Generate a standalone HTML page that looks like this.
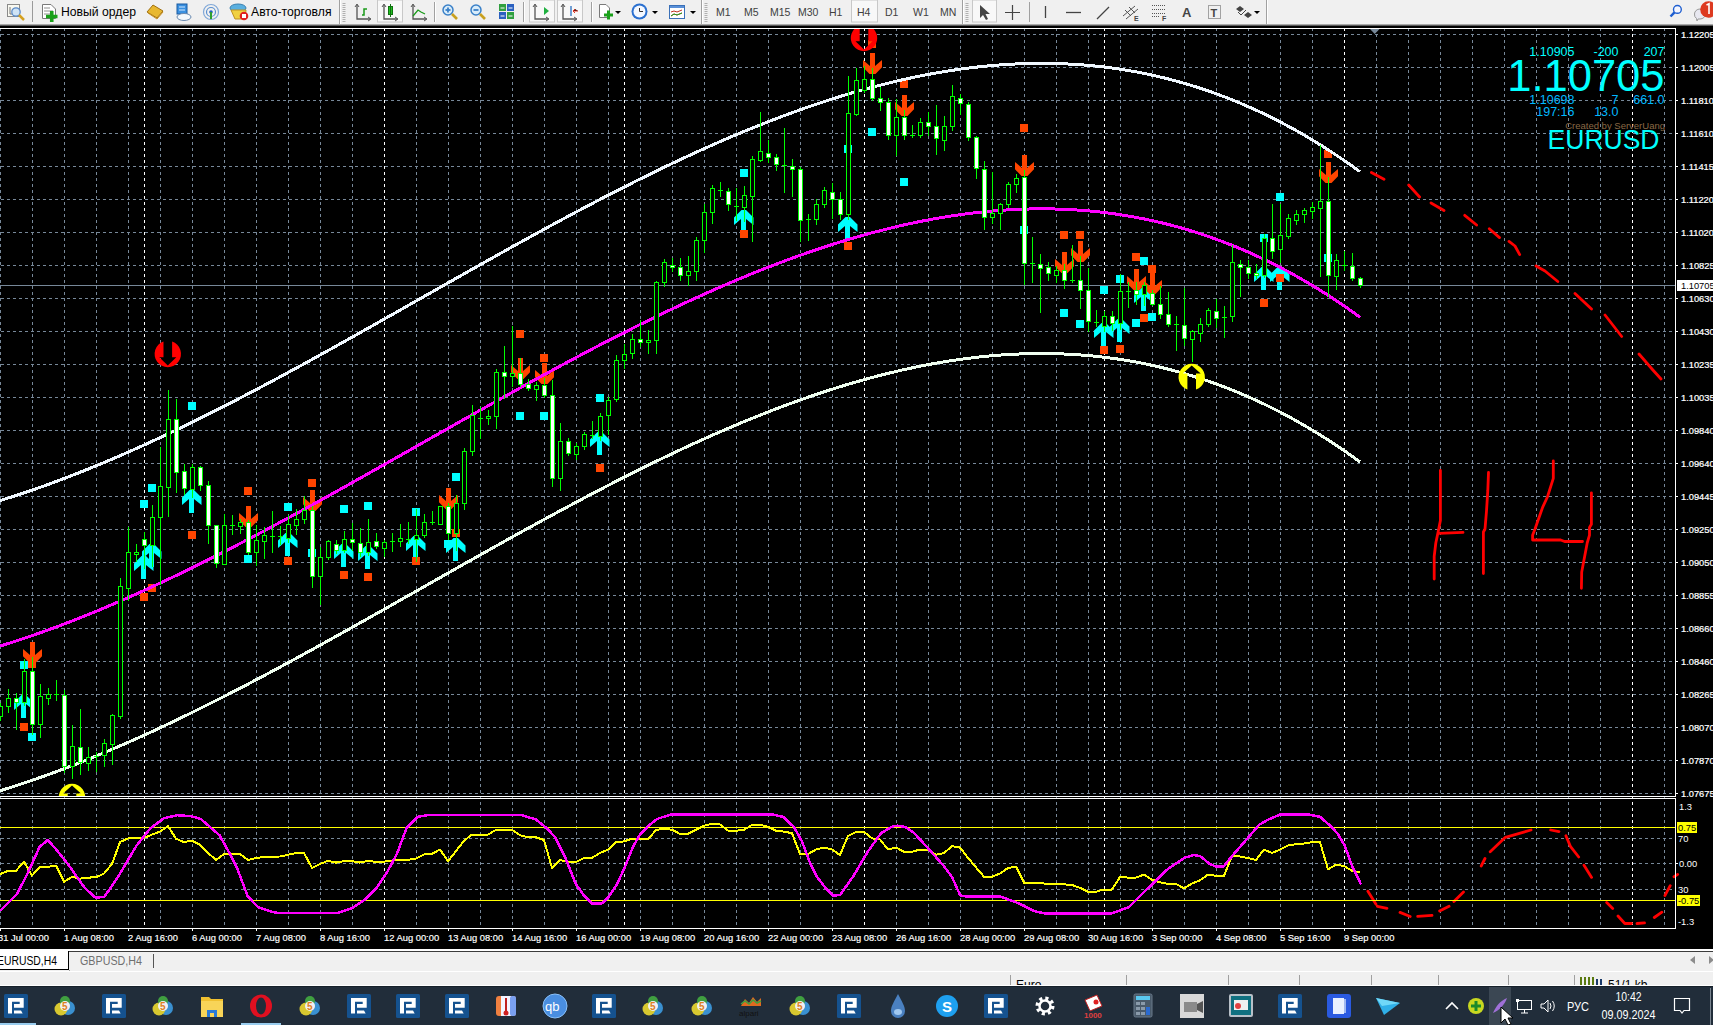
<!DOCTYPE html>
<html><head><meta charset="utf-8"><title>EURUSD,H4</title>
<style>
html,body{margin:0;padding:0;width:1713px;height:1025px;overflow:hidden;background:#000;}
svg{position:absolute;left:0;top:0;display:block}
text{font-family:"Liberation Sans",sans-serif}
</style></head><body>
<svg width="1713" height="1025" viewBox="0 0 1713 1025">
<!-- toolbar -->
<rect x="0" y="0" width="1713" height="24" fill="#f0f0f0"/>
<rect x="0" y="24" width="1713" height="1" fill="#a9a9a9"/>
<rect x="0" y="25" width="1713" height="1" fill="#595959"/>
<rect x="7.5" y="4.5" width="12" height="12" fill="#f8f8f0" stroke="#8a8a8a"/><path d="M10 7V14H18" stroke="#777" fill="none"/><circle cx="16" cy="12" r="4.2" fill="#cfe3f5" stroke="#5a8ac8" stroke-width="1.3"/><path d="M19 15L24 20" stroke="#d4a020" stroke-width="2.5"/><rect x="32" y="1" width="1" height="21" fill="#9a9a9a"/><path d="M42.5 4.5H51L55.5 9V18.5H42.5Z" fill="#fff" stroke="#7a7a7a"/><path d="M44 8H50M44 11H53M44 14H50" stroke="#909090"/><path d="M46 16.5H57.5M51.75 11V22" stroke="#1aa01a" stroke-width="3.6"/><text x="61" y="15.5" font-size="12.2" fill="#000">Новый ордер</text><path d="M147 12L153 5L163 11L157 18Z" fill="#e8b830" stroke="#a07010" stroke-width="1"/><path d="M148 13L157 19L163 12" stroke="#c89020" fill="none" stroke-width="1"/><rect x="177" y="4" width="10" height="10" fill="#3a90e0" stroke="#1a5aa0"/><path d="M179 7H185M179 10H185" stroke="#d0e8ff"/><ellipse cx="184" cy="17" rx="7" ry="3.5" fill="#f4f8fc" stroke="#6a8ab0"/><circle cx="211" cy="12" r="7.5" fill="none" stroke="#80a8d8" stroke-width="1.2"/><circle cx="211" cy="12" r="4.5" fill="none" stroke="#5a90d0" stroke-width="1.2"/><circle cx="211" cy="12" r="1.8" fill="#2060c0"/><path d="M211 12V19" stroke="#30a030" stroke-width="2"/><ellipse cx="238" cy="8" rx="8" ry="4" fill="#5ab0e0" stroke="#3a80b0"/><path d="M231 10L235 19H245L246 10Z" fill="#f0d040" stroke="#c09020"/><circle cx="244" cy="16" r="4.3" fill="#e02020"/><rect x="242" y="14" width="4" height="4" fill="#fff"/><text x="251" y="15.5" font-size="12.2" fill="#000">Авто-торговля</text><rect x="339" y="0" width="1" height="24" fill="#a0a0a0"/><rect x="340" y="0" width="1" height="24" fill="#ffffff"/><path d="M344 3V22" stroke="#b0b0b0" stroke-width="3" stroke-dasharray="1 1"/><path d="M357 5V19H370" stroke="#555" fill="none" stroke-width="1.3"/><path d="M355 7L357 4L359 7M368 17L371 19L368 21" stroke="#555" fill="none"/><path d="M362 15H364V9H367" stroke="#1a9a1a" fill="none" stroke-width="1.5"/><rect x="377.5" y="0" width="25" height="22" fill="#f8f8f8" stroke="#c8c8c8" stroke-width="1"/><path d="M384 5V19H397" stroke="#555" fill="none" stroke-width="1.3"/><path d="M382 7L384 4L386 7M395 17L398 19L395 21" stroke="#555" fill="none"/><rect x="388.5" y="6.5" width="4" height="8" fill="#20c020" stroke="#107010"/><path d="M390.5 4V17" stroke="#107010"/><path d="M413 5V19H426" stroke="#555" fill="none" stroke-width="1.3"/><path d="M411 7L413 4L415 7M424 17L427 19L424 21" stroke="#555" fill="none"/><path d="M413 16L418 10L421 12L425 14" stroke="#1a9a1a" fill="none" stroke-width="1.3"/><rect x="434" y="2" width="1" height="20" fill="#a0a0a0"/><rect x="435" y="2" width="1" height="20" fill="#ffffff"/><circle cx="448" cy="10" r="5" fill="#d8ecfa" stroke="#3a80c8" stroke-width="1.5"/><path d="M452 14L457 19" stroke="#c8a020" stroke-width="2.6"/><path d="M445.5 10H450.5" stroke="#3a80c8" stroke-width="1.8"/><path d="M448 7.5V12.5" stroke="#3a80c8" stroke-width="1.8"/><circle cx="476" cy="10" r="5" fill="#d8ecfa" stroke="#3a80c8" stroke-width="1.5"/><path d="M480 14L485 19" stroke="#c8a020" stroke-width="2.6"/><path d="M473.5 10H478.5" stroke="#3a80c8" stroke-width="1.8"/><rect x="499" y="4" width="7" height="7" fill="#30a040"/><rect x="507" y="4" width="7" height="7" fill="#2a60c0"/><rect x="499" y="12" width="7" height="7" fill="#2a60c0"/><rect x="507" y="12" width="7" height="7" fill="#30a040"/><path d="M500.5 8H504.5M508.5 8H512.5M500.5 16H504.5M508.5 16H512.5" stroke="#fff"/><rect x="523" y="2" width="1" height="20" fill="#a0a0a0"/><rect x="524" y="2" width="1" height="20" fill="#ffffff"/><rect x="529.5" y="0" width="25" height="22" fill="#f8f8f8" stroke="#c8c8c8" stroke-width="1"/><path d="M535 5V19H548" stroke="#555" fill="none" stroke-width="1.3"/><path d="M533 7L535 4L537 7M546 17L549 19L546 21" stroke="#555" fill="none"/><path d="M544 7L549 11L544 15Z" fill="#20b040"/><rect x="557.5" y="0" width="25" height="22" fill="#f8f8f8" stroke="#c8c8c8" stroke-width="1"/><path d="M563 5V19H576" stroke="#555" fill="none" stroke-width="1.3"/><path d="M561 7L563 4L565 7M574 17L577 19L574 21" stroke="#555" fill="none"/><path d="M571 6V16" stroke="#2a70c0" stroke-width="1.3"/><path d="M578 11H573L575 9M573 11L575 13" stroke="#e03020"/><rect x="591" y="2" width="1" height="20" fill="#a0a0a0"/><rect x="592" y="2" width="1" height="20" fill="#ffffff"/><path d="M599.5 4.5H606L609.5 8V17.5H599.5Z" fill="#fff" stroke="#7a7a7a"/><path d="M604 15H613M608.5 10.5V19.5" stroke="#1aa01a" stroke-width="3"/><path d="M615 11H621L618 14Z" fill="#000"/><circle cx="639.5" cy="11.5" r="8" fill="#2a70d0"/><circle cx="639.5" cy="11.5" r="6" fill="#f4f8ff"/><path d="M639.5 8V11.5H643" stroke="#333" fill="none"/><path d="M652 11H658L655 14Z" fill="#000"/><rect x="669.5" y="5.5" width="15" height="13" fill="#fff" stroke="#3a70b8"/><rect x="670" y="6" width="14" height="2" fill="#5a90d8"/><path d="M671 12L674 11L677 12L682 10M671 16L674 14L677 15L682 13" stroke="#c03020" fill="none"/><path d="M671 16L674 14L677 15L682 13" stroke="#20a020" fill="none"/><path d="M690 11H696L693 14Z" fill="#000"/><rect x="701" y="0" width="1" height="24" fill="#a0a0a0"/><rect x="702" y="0" width="1" height="24" fill="#ffffff"/><path d="M706 3V22" stroke="#b0b0b0" stroke-width="3" stroke-dasharray="1 1"/><rect x="851.5" y="0" width="26" height="22" fill="#f8f8f8" stroke="#c8c8c8" stroke-width="1"/><text x="716" y="16" font-size="10.5" fill="#404040">M1</text><text x="744" y="16" font-size="10.5" fill="#404040">M5</text><text x="770" y="16" font-size="10.5" fill="#404040">M15</text><text x="798" y="16" font-size="10.5" fill="#404040">M30</text><text x="829" y="16" font-size="10.5" fill="#404040">H1</text><text x="857" y="16" font-size="10.5" fill="#404040">H4</text><text x="885" y="16" font-size="10.5" fill="#404040">D1</text><text x="913" y="16" font-size="10.5" fill="#404040">W1</text><text x="940" y="16" font-size="10.5" fill="#404040">MN</text><rect x="962" y="0" width="1" height="24" fill="#a0a0a0"/><rect x="963" y="0" width="1" height="24" fill="#ffffff"/><path d="M967 3V22" stroke="#b0b0b0" stroke-width="3" stroke-dasharray="1 1"/><rect x="972.5" y="0" width="24" height="22" fill="#f8f8f8" stroke="#c8c8c8" stroke-width="1"/><path d="M980 5L980 18L983 15L986 20L988 19L985.5 14H990Z" fill="#444"/><path d="M1005 12.5H1020M1012.5 5V20" stroke="#444" stroke-width="1.2"/><rect x="1029" y="2" width="1" height="20" fill="#a0a0a0"/><path d="M1045.5 6V18" stroke="#444" stroke-width="1.3"/><path d="M1066 12.5H1081" stroke="#444" stroke-width="1.3"/><path d="M1097 19L1109 7" stroke="#444" stroke-width="1.3"/><path d="M1123 16L1135 6M1126 19L1138 9M1125 10L1131 16M1129 7L1135 13" stroke="#555" fill="none"/><text x="1134" y="21" font-size="7" font-weight="bold" fill="#444">E</text><path d="M1152 5.5H1165M1152 9.5H1165M1152 13.5H1165M1152 16.5H1160" stroke="#555" stroke-dasharray="1 1"/><text x="1162" y="21" font-size="7" font-weight="bold" fill="#444">F</text><text x="1182" y="17" font-size="13" font-weight="bold" fill="#444">A</text><rect x="1208.5" y="5.5" width="12" height="13" fill="none" stroke="#555" stroke-dasharray="1 1"/><text x="1210.5" y="17" font-size="11" font-weight="bold" fill="#444">T</text><path d="M1236 9L1240 6L1244 9L1240 12Z M1244 15L1248 12L1252 15L1248 18Z" fill="#444"/><path d="M1238 12L1241 15L1246 10" stroke="#444" fill="none"/><path d="M1254 11H1260L1257 14Z" fill="#000"/><rect x="1266" y="0" width="1" height="24" fill="#a0a0a0"/><rect x="1267" y="0" width="1" height="24" fill="#fff"/><circle cx="1677.4" cy="9.4" r="3.9" fill="#f4f6ff" stroke="#1e5ed0" stroke-width="1.4"/><path d="M1674.5 12.3L1670.5 16.5" stroke="#1e5ed0" stroke-width="2.4"/><path d="M1694.5 14A5.5 5 0 1 1 1700 19H1698L1697 21L1696.5 18.5A5.5 5 0 0 1 1694.5 14Z" fill="#e8e8f0" stroke="#999"/><circle cx="1708.5" cy="9.5" r="8.3" fill="#dd3a20"/><path d="M1706.5 5L1709 3.8V14" stroke="#fff" stroke-width="1.6" fill="none"/>
<rect x="0" y="26" width="1713" height="923" fill="#000"/>
<path d="M1 34.5H1675M1 67.5H1675M1 100.5H1675M1 133.5H1675M1 166.5H1675M1 199.5H1675M1 232.5H1675M1 265.5H1675M1 298.5H1675M1 331.5H1675M1 364.5H1675M1 397.5H1675M1 430.5H1675M1 463.5H1675M1 496.5H1675M1 529.5H1675M1 562.5H1675M1 595.5H1675M1 628.5H1675M1 661.5H1675M1 694.5H1675M1 727.5H1675M1 760.5H1675M1 793.5H1675M1 838.5H1675M1 863.5H1675M1 889.5H1675" stroke="#778899" stroke-width="1" stroke-dasharray="3 3" fill="none" shape-rendering="crispEdges"/>
<path d="M0.5 28V928M32.5 28V928M64.5 28V928M96.5 28V928M128.5 28V928M160.5 28V928M192.5 28V928M224.5 28V928M256.5 28V928M288.5 28V928M320.5 28V928M352.5 28V928M416.5 28V928M448.5 28V928M480.5 28V928M512.5 28V928M544.5 28V928M576.5 28V928M608.5 28V928M640.5 28V928M672.5 28V928M704.5 28V928M736.5 28V928M768.5 28V928M800.5 28V928M832.5 28V928M896.5 28V928M928.5 28V928M960.5 28V928M992.5 28V928M1024.5 28V928M1056.5 28V928M1088.5 28V928M1120.5 28V928M1152.5 28V928M1184.5 28V928M1216.5 28V928M1248.5 28V928M1280.5 28V928M1312.5 28V928M1376.5 28V928M1408.5 28V928M1440.5 28V928M1472.5 28V928M1504.5 28V928M1536.5 28V928M1568.5 28V928M1600.5 28V928M1664.5 28V928" stroke="#778899" stroke-width="1" stroke-dasharray="3 3" fill="none" shape-rendering="crispEdges"/>
<path d="M144.5 28V928M384.5 28V928M624.5 28V928M864.5 28V928M1104.5 28V928M1344.5 28V928M1632.5 28V928" stroke="#ffffff" stroke-width="1" stroke-dasharray="3 3" fill="none" shape-rendering="crispEdges"/>
<path d="M0 285.5H1675" stroke="#778899" stroke-width="1" shape-rendering="crispEdges"/>
<path d="M1370 29H1379.5L1374.75 34Z" fill="#778899"/>
<path d="M21.5 695L26 695L33.5 702.5L33.5 710L26 704L26 718L21 718L21 704L14 710L14 702.5Z" fill="#00ffff"/><path d="M141.5 556L146 556L153.5 563.5L153.5 571L146 565L146 579L141 579L141 565L134 571L134 563.5Z" fill="#00ffff"/><path d="M149.5 544L154 544L161.5 551.5L161.5 559L154 553L154 567L149 567L149 553L142 559L142 551.5Z" fill="#00ffff"/><path d="M189.5 490L194 490L201.5 497.5L201.5 505L194 499L194 513L189 513L189 499L182 505L182 497.5Z" fill="#00ffff"/><path d="M285.5 533L290 533L297.5 540.5L297.5 548L290 542L290 556L285 556L285 542L278 548L278 540.5Z" fill="#00ffff"/><path d="M341.5 544L346 544L353.5 551.5L353.5 559L346 553L346 567L341 567L341 553L334 559L334 551.5Z" fill="#00ffff"/><path d="M365.5 546L370 546L377.5 553.5L377.5 561L370 555L370 569L365 569L365 555L358 561L358 553.5Z" fill="#00ffff"/><path d="M413.5 536L418 536L425.5 543.5L425.5 551L418 545L418 559L413 559L413 545L406 551L406 543.5Z" fill="#00ffff"/><path d="M453.5 538L458 538L465.5 545.5L465.5 553L458 547L458 561L453 561L453 547L446 553L446 545.5Z" fill="#00ffff"/><path d="M597.5 432L602 432L609.5 439.5L609.5 447L602 441L602 455L597 455L597 441L590 447L590 439.5Z" fill="#00ffff"/><path d="M741.5 210L746 210L753.5 217.5L753.5 225L746 219L746 233L741 233L741 219L734 225L734 217.5Z" fill="#00ffff"/><path d="M845.5 217L850 217L857.5 224.5L857.5 232L850 226L850 240L845 240L845 226L838 232L838 224.5Z" fill="#00ffff"/><path d="M1101.5 323L1106 323L1113.5 330.5L1113.5 338L1106 332L1106 346L1101 346L1101 332L1094 338L1094 330.5Z" fill="#00ffff"/><path d="M1117.5 319L1122 319L1129.5 326.5L1129.5 334L1122 328L1122 342L1117 342L1117 328L1110 334L1110 326.5Z" fill="#00ffff"/><path d="M1141.5 288L1146 288L1153.5 295.5L1153.5 303L1146 297L1146 311L1141 311L1141 297L1134 303L1134 295.5Z" fill="#00ffff"/><path d="M1261.5 267L1266 267L1273.5 274.5L1273.5 282L1266 276L1266 290L1261 290L1261 276L1254 282L1254 274.5Z" fill="#00ffff"/><path d="M1277.5 267L1282 267L1289.5 274.5L1289.5 282L1282 276L1282 290L1277 290L1277 276L1270 282L1270 274.5Z" fill="#00ffff"/><path d="M30 642L35 642L35 655L42 649L42 656.3L35.5 663L29.5 663L23 656.3L23 649L30 655Z" fill="#ff4500"/><path d="M246 506L251 506L251 519L258 513L258 520.3L251.5 527L245.5 527L239 520.3L239 513L246 519Z" fill="#ff4500"/><path d="M310 490L315 490L315 503L322 497L322 504.3L315.5 511L309.5 511L303 504.3L303 497L310 503Z" fill="#ff4500"/><path d="M446 488L451 488L451 501L458 495L458 502.3L451.5 509L445.5 509L439 502.3L439 495L446 501Z" fill="#ff4500"/><path d="M518 358L523 358L523 371L530 365L530 372.3L523.5 379L517.5 379L511 372.3L511 365L518 371Z" fill="#ff4500"/><path d="M542 363L547 363L547 376L554 370L554 377.3L547.5 384L541.5 384L535 377.3L535 370L542 376Z" fill="#ff4500"/><path d="M870 53L875 53L875 66L882 60L882 67.3L875.5 74L869.5 74L863 67.3L863 60L870 66Z" fill="#ff4500"/><path d="M902 95L907 95L907 108L914 102L914 109.3L907.5 116L901.5 116L895 109.3L895 102L902 108Z" fill="#ff4500"/><path d="M1022 155L1027 155L1027 168L1034 162L1034 169.3L1027.5 176L1021.5 176L1015 169.3L1015 162L1022 168Z" fill="#ff4500"/><path d="M1062 252L1067 252L1067 265L1074 259L1074 266.3L1067.5 273L1061.5 273L1055 266.3L1055 259L1062 265Z" fill="#ff4500"/><path d="M1078 241L1083 241L1083 254L1090 248L1090 255.3L1083.5 262L1077.5 262L1071 255.3L1071 248L1078 254Z" fill="#ff4500"/><path d="M1134 269L1139 269L1139 282L1146 276L1146 283.3L1139.5 290L1133.5 290L1127 283.3L1127 276L1134 282Z" fill="#ff4500"/><path d="M1150 273L1155 273L1155 286L1162 280L1162 287.3L1155.5 294L1149.5 294L1143 287.3L1143 280L1150 286Z" fill="#ff4500"/><path d="M1326 162L1331 162L1331 175L1338 169L1338 176.3L1331.5 183L1325.5 183L1319 176.3L1319 169L1326 175Z" fill="#ff4500"/>
<rect x="20" y="661" width="8" height="8" fill="#00ffff"/><rect x="28" y="733" width="8" height="8" fill="#00ffff"/><rect x="188" y="402" width="8" height="8" fill="#00ffff"/><rect x="148" y="484" width="8" height="8" fill="#00ffff"/><rect x="140" y="500" width="8" height="8" fill="#00ffff"/><rect x="244" y="555" width="8" height="8" fill="#00ffff"/><rect x="284" y="503" width="8" height="8" fill="#00ffff"/><rect x="308" y="549" width="8" height="8" fill="#00ffff"/><rect x="340" y="505" width="8" height="8" fill="#00ffff"/><rect x="364" y="502" width="8" height="8" fill="#00ffff"/><rect x="412" y="508" width="8" height="8" fill="#00ffff"/><rect x="452" y="473" width="8" height="8" fill="#00ffff"/><rect x="444" y="540" width="8" height="8" fill="#00ffff"/><rect x="516" y="412" width="8" height="8" fill="#00ffff"/><rect x="540" y="412" width="8" height="8" fill="#00ffff"/><rect x="596" y="394" width="8" height="8" fill="#00ffff"/><rect x="740" y="169" width="8" height="8" fill="#00ffff"/><rect x="844" y="145" width="8" height="8" fill="#00ffff"/><rect x="868" y="128" width="8" height="8" fill="#00ffff"/><rect x="900" y="178" width="8" height="8" fill="#00ffff"/><rect x="1020" y="226" width="8" height="8" fill="#00ffff"/><rect x="1060" y="309" width="8" height="8" fill="#00ffff"/><rect x="1076" y="320" width="8" height="8" fill="#00ffff"/><rect x="1100" y="286" width="8" height="8" fill="#00ffff"/><rect x="1116" y="275" width="8" height="8" fill="#00ffff"/><rect x="1132" y="319" width="8" height="8" fill="#00ffff"/><rect x="1140" y="257" width="8" height="8" fill="#00ffff"/><rect x="1148" y="313" width="8" height="8" fill="#00ffff"/><rect x="1260" y="234" width="8" height="8" fill="#00ffff"/><rect x="1276" y="193" width="8" height="8" fill="#00ffff"/><rect x="1324" y="254" width="8" height="8" fill="#00ffff"/><rect x="28" y="660" width="8" height="8" fill="#ff4500"/><rect x="20" y="723" width="8" height="8" fill="#ff4500"/><rect x="188" y="531" width="8" height="8" fill="#ff4500"/><rect x="148" y="584" width="8" height="8" fill="#ff4500"/><rect x="140" y="593" width="8" height="8" fill="#ff4500"/><rect x="244" y="487" width="8" height="8" fill="#ff4500"/><rect x="284" y="557" width="8" height="8" fill="#ff4500"/><rect x="308" y="479" width="8" height="8" fill="#ff4500"/><rect x="340" y="571" width="8" height="8" fill="#ff4500"/><rect x="364" y="573" width="8" height="8" fill="#ff4500"/><rect x="412" y="557" width="8" height="8" fill="#ff4500"/><rect x="452" y="529" width="8" height="8" fill="#ff4500"/><rect x="516" y="330" width="8" height="8" fill="#ff4500"/><rect x="540" y="354" width="8" height="8" fill="#ff4500"/><rect x="596" y="464" width="8" height="8" fill="#ff4500"/><rect x="740" y="230" width="8" height="8" fill="#ff4500"/><rect x="844" y="242" width="8" height="8" fill="#ff4500"/><rect x="868" y="40" width="8" height="8" fill="#ff4500"/><rect x="900" y="80" width="8" height="8" fill="#ff4500"/><rect x="1020" y="124" width="8" height="8" fill="#ff4500"/><rect x="1060" y="231" width="8" height="8" fill="#ff4500"/><rect x="1076" y="231" width="8" height="8" fill="#ff4500"/><rect x="1100" y="346" width="8" height="8" fill="#ff4500"/><rect x="1116" y="345" width="8" height="8" fill="#ff4500"/><rect x="1132" y="253" width="8" height="8" fill="#ff4500"/><rect x="1140" y="314" width="8" height="8" fill="#ff4500"/><rect x="1148" y="265" width="8" height="8" fill="#ff4500"/><rect x="1260" y="299" width="8" height="8" fill="#ff4500"/><rect x="1276" y="274" width="8" height="8" fill="#ff4500"/><rect x="1324" y="150" width="8" height="8" fill="#ff4500"/>
<path d="M0 500.59L4 499.35L8 498.09L12 496.82L16 495.52L20 494.21L24 492.87L28 491.52L32 490.15L36 488.76L40 487.35L44 485.93L48 484.49L52 483.03L56 481.55L60 480.05L64 478.54L68 477.01L72 475.47L76 473.91L80 472.33L84 470.73L88 469.12L92 467.50L96 465.86L100 464.20L104 462.53L108 460.84L112 459.14L116 457.43L120 455.70L124 453.95L128 452.19L132 450.42L136 448.64L140 446.84L144 445.03L148 443.20L152 441.36L156 439.51L160 437.65L164 435.77L168 433.89L172 431.99L176 430.07L180 428.15L184 426.22L188 424.27L192 422.32L196 420.35L200 418.37L204 416.38L208 414.38L212 412.38L216 410.36L220 408.33L224 406.29L228 404.25L232 402.19L236 400.13L240 398.05L244 395.97L248 393.88L252 391.78L256 389.68L260 387.56L264 385.44L268 383.31L272 381.17L276 379.03L280 376.88L284 374.72L288 372.56L292 370.39L296 368.22L300 366.04L304 363.85L308 361.66L312 359.46L316 357.25L320 355.05L324 352.83L328 350.62L332 348.40L336 346.17L340 343.94L344 341.71L348 339.47L352 337.23L356 334.98L360 332.74L364 330.49L368 328.23L372 325.98L376 323.72L380 321.46L384 319.20L388 316.94L392 314.67L396 312.41L400 310.14L404 307.87L408 305.60L412 303.33L416 301.06L420 298.79L424 296.52L428 294.25L432 291.98L436 289.71L440 287.45L444 285.18L448 282.91L452 280.65L456 278.38L460 276.12L464 273.86L468 271.60L472 269.35L476 267.09L480 264.84L484 262.59L488 260.35L492 258.10L496 255.87L500 253.63L504 251.40L508 249.17L512 246.95L516 244.73L520 242.51L524 240.30L528 238.10L532 235.90L536 233.70L540 231.51L544 229.33L548 227.15L552 224.98L556 222.81L560 220.65L564 218.50L568 216.36L572 214.22L576 212.08L580 209.96L584 207.84L588 205.73L592 203.63L596 201.54L600 199.45L604 197.37L608 195.30L612 193.25L616 191.19L620 189.15L624 187.12L628 185.10L632 183.09L636 181.08L640 179.09L644 177.11L648 175.14L652 173.17L656 171.22L660 169.29L664 167.36L668 165.44L672 163.54L676 161.64L680 159.76L684 157.89L688 156.04L692 154.19L696 152.36L700 150.54L704 148.74L708 146.95L712 145.17L716 143.40L720 141.65L724 139.92L728 138.20L732 136.49L736 134.80L740 133.12L744 131.45L748 129.81L752 128.17L756 126.56L760 124.96L764 123.37L768 121.80L772 120.25L776 118.71L780 117.19L784 115.69L788 114.21L792 112.74L796 111.29L800 109.86L804 108.44L808 107.04L812 105.67L816 104.30L820 102.96L824 101.64L828 100.34L832 99.05L836 97.79L840 96.54L844 95.32L848 94.11L852 92.92L856 91.76L860 90.61L864 89.49L868 88.38L872 87.30L876 86.24L880 85.20L884 84.18L888 83.19L892 82.21L896 81.26L900 80.33L904 79.42L908 78.54L912 77.68L916 76.84L920 76.02L924 75.23L928 74.46L932 73.72L936 73.00L940 72.30L944 71.63L948 70.99L952 70.37L956 69.77L960 69.20L964 68.65L968 68.13L972 67.64L976 67.17L980 66.73L984 66.31L988 65.92L992 65.56L996 65.22L1000 64.91L1004 64.63L1008 64.38L1012 64.15L1016 63.95L1020 63.78L1024 63.64L1028 63.52L1032 63.44L1036 63.38L1040 63.35L1044 63.36L1048 63.39L1052 63.45L1056 63.54L1060 63.66L1064 63.81L1068 63.99L1072 64.20L1076 64.44L1080 64.71L1084 65.02L1088 65.35L1092 65.72L1096 66.11L1100 66.54L1104 67.01L1108 67.50L1112 68.03L1116 68.59L1120 69.18L1124 69.80L1128 70.46L1132 71.15L1136 71.87L1140 72.63L1144 73.42L1148 74.25L1152 75.11L1156 76.00L1160 76.93L1164 77.90L1168 78.90L1172 79.93L1176 81.00L1180 82.11L1184 83.25L1188 84.42L1192 85.64L1196 86.89L1200 88.17L1204 89.50L1208 90.86L1212 92.25L1216 93.69L1220 95.16L1224 96.67L1228 98.21L1232 99.80L1236 101.42L1240 103.08L1244 104.78L1248 106.52L1252 108.30L1256 110.12L1260 111.97L1264 113.87L1268 115.81L1272 117.78L1276 119.80L1280 121.85L1284 123.95L1288 126.09L1292 128.26L1296 130.48L1300 132.74L1304 135.04L1308 137.39L1312 139.77L1316 142.20L1320 144.67L1324 147.18L1328 149.73L1332 152.33L1336 154.97L1340 157.65L1344 160.38L1348 163.15L1352 165.96L1356 168.82L1360 171.72" stroke="#f0f8ff" stroke-width="3" fill="none" shape-rendering="crispEdges"/>
<path d="M0 790.79L4 789.55L8 788.29L12 787.02L16 785.72L20 784.41L24 783.07L28 781.72L32 780.35L36 778.96L40 777.55L44 776.13L48 774.69L52 773.23L56 771.75L60 770.25L64 768.74L68 767.21L72 765.67L76 764.11L80 762.53L84 760.93L88 759.32L92 757.70L96 756.06L100 754.40L104 752.73L108 751.04L112 749.34L116 747.63L120 745.90L124 744.15L128 742.39L132 740.62L136 738.84L140 737.04L144 735.23L148 733.40L152 731.56L156 729.71L160 727.85L164 725.97L168 724.09L172 722.19L176 720.27L180 718.35L184 716.42L188 714.47L192 712.52L196 710.55L200 708.57L204 706.58L208 704.58L212 702.58L216 700.56L220 698.53L224 696.49L228 694.45L232 692.39L236 690.33L240 688.25L244 686.17L248 684.08L252 681.98L256 679.88L260 677.76L264 675.64L268 673.51L272 671.37L276 669.23L280 667.08L284 664.92L288 662.76L292 660.59L296 658.42L300 656.24L304 654.05L308 651.86L312 649.66L316 647.45L320 645.25L324 643.03L328 640.82L332 638.60L336 636.37L340 634.14L344 631.91L348 629.67L352 627.43L356 625.18L360 622.94L364 620.69L368 618.43L372 616.18L376 613.92L380 611.66L384 609.40L388 607.14L392 604.87L396 602.61L400 600.34L404 598.07L408 595.80L412 593.53L416 591.26L420 588.99L424 586.72L428 584.45L432 582.18L436 579.91L440 577.65L444 575.38L448 573.11L452 570.85L456 568.58L460 566.32L464 564.06L468 561.80L472 559.55L476 557.29L480 555.04L484 552.79L488 550.55L492 548.30L496 546.07L500 543.83L504 541.60L508 539.37L512 537.15L516 534.93L520 532.71L524 530.50L528 528.30L532 526.10L536 523.90L540 521.71L544 519.53L548 517.35L552 515.18L556 513.01L560 510.85L564 508.70L568 506.56L572 504.42L576 502.28L580 500.16L584 498.04L588 495.93L592 493.83L596 491.74L600 489.65L604 487.57L608 485.50L612 483.45L616 481.39L620 479.35L624 477.32L628 475.30L632 473.29L636 471.28L640 469.29L644 467.31L648 465.34L652 463.37L656 461.42L660 459.49L664 457.56L668 455.64L672 453.74L676 451.84L680 449.96L684 448.09L688 446.24L692 444.39L696 442.56L700 440.74L704 438.94L708 437.15L712 435.37L716 433.60L720 431.85L724 430.12L728 428.40L732 426.69L736 425.00L740 423.32L744 421.65L748 420.01L752 418.37L756 416.76L760 415.16L764 413.57L768 412.00L772 410.45L776 408.91L780 407.39L784 405.89L788 404.41L792 402.94L796 401.49L800 400.06L804 398.64L808 397.24L812 395.87L816 394.50L820 393.16L824 391.84L828 390.54L832 389.25L836 387.99L840 386.74L844 385.52L848 384.31L852 383.12L856 381.96L860 380.81L864 379.69L868 378.58L872 377.50L876 376.44L880 375.40L884 374.38L888 373.39L892 372.41L896 371.46L900 370.53L904 369.62L908 368.74L912 367.88L916 367.04L920 366.22L924 365.43L928 364.66L932 363.92L936 363.20L940 362.50L944 361.83L948 361.19L952 360.57L956 359.97L960 359.40L964 358.85L968 358.33L972 357.84L976 357.37L980 356.93L984 356.51L988 356.12L992 355.76L996 355.42L1000 355.11L1004 354.83L1008 354.58L1012 354.35L1016 354.15L1020 353.98L1024 353.84L1028 353.72L1032 353.64L1036 353.58L1040 353.55L1044 353.56L1048 353.59L1052 353.65L1056 353.74L1060 353.86L1064 354.01L1068 354.19L1072 354.40L1076 354.64L1080 354.91L1084 355.22L1088 355.55L1092 355.92L1096 356.31L1100 356.74L1104 357.21L1108 357.70L1112 358.23L1116 358.79L1120 359.38L1124 360.00L1128 360.66L1132 361.35L1136 362.07L1140 362.83L1144 363.62L1148 364.45L1152 365.31L1156 366.20L1160 367.13L1164 368.10L1168 369.10L1172 370.13L1176 371.20L1180 372.31L1184 373.45L1188 374.62L1192 375.84L1196 377.09L1200 378.37L1204 379.70L1208 381.06L1212 382.45L1216 383.89L1220 385.36L1224 386.87L1228 388.41L1232 390.00L1236 391.62L1240 393.28L1244 394.98L1248 396.72L1252 398.50L1256 400.32L1260 402.17L1264 404.07L1268 406.01L1272 407.98L1276 410.00L1280 412.05L1284 414.15L1288 416.29L1292 418.46L1296 420.68L1300 422.94L1304 425.24L1308 427.59L1312 429.97L1316 432.40L1320 434.87L1324 437.38L1328 439.93L1332 442.53L1336 445.17L1340 447.85L1344 450.58L1348 453.35L1352 456.16L1356 459.02L1360 461.92" stroke="#f0fff0" stroke-width="3" fill="none" shape-rendering="crispEdges"/>
<path d="M0 646.09L4 644.85L8 643.59L12 642.32L16 641.02L20 639.71L24 638.37L28 637.02L32 635.65L36 634.26L40 632.85L44 631.43L48 629.99L52 628.53L56 627.05L60 625.55L64 624.04L68 622.51L72 620.97L76 619.41L80 617.83L84 616.23L88 614.62L92 613.00L96 611.36L100 609.70L104 608.03L108 606.34L112 604.64L116 602.93L120 601.20L124 599.45L128 597.69L132 595.92L136 594.14L140 592.34L144 590.53L148 588.70L152 586.86L156 585.01L160 583.15L164 581.27L168 579.39L172 577.49L176 575.57L180 573.65L184 571.72L188 569.77L192 567.82L196 565.85L200 563.87L204 561.88L208 559.88L212 557.88L216 555.86L220 553.83L224 551.79L228 549.75L232 547.69L236 545.63L240 543.55L244 541.47L248 539.38L252 537.28L256 535.18L260 533.06L264 530.94L268 528.81L272 526.67L276 524.53L280 522.38L284 520.22L288 518.06L292 515.89L296 513.72L300 511.54L304 509.35L308 507.16L312 504.96L316 502.75L320 500.55L324 498.33L328 496.12L332 493.90L336 491.67L340 489.44L344 487.21L348 484.97L352 482.73L356 480.48L360 478.24L364 475.99L368 473.73L372 471.48L376 469.22L380 466.96L384 464.70L388 462.44L392 460.17L396 457.91L400 455.64L404 453.37L408 451.10L412 448.83L416 446.56L420 444.29L424 442.02L428 439.75L432 437.48L436 435.21L440 432.95L444 430.68L448 428.41L452 426.15L456 423.88L460 421.62L464 419.36L468 417.10L472 414.85L476 412.59L480 410.34L484 408.09L488 405.85L492 403.60L496 401.37L500 399.13L504 396.90L508 394.67L512 392.45L516 390.23L520 388.01L524 385.80L528 383.60L532 381.40L536 379.20L540 377.01L544 374.83L548 372.65L552 370.48L556 368.31L560 366.15L564 364.00L568 361.86L572 359.72L576 357.58L580 355.46L584 353.34L588 351.23L592 349.13L596 347.04L600 344.95L604 342.87L608 340.80L612 338.75L616 336.69L620 334.65L624 332.62L628 330.60L632 328.59L636 326.58L640 324.59L644 322.61L648 320.64L652 318.67L656 316.72L660 314.79L664 312.86L668 310.94L672 309.04L676 307.14L680 305.26L684 303.39L688 301.54L692 299.69L696 297.86L700 296.04L704 294.24L708 292.45L712 290.67L716 288.90L720 287.15L724 285.42L728 283.70L732 281.99L736 280.30L740 278.62L744 276.95L748 275.31L752 273.67L756 272.06L760 270.46L764 268.87L768 267.30L772 265.75L776 264.21L780 262.69L784 261.19L788 259.71L792 258.24L796 256.79L800 255.36L804 253.94L808 252.54L812 251.17L816 249.80L820 248.46L824 247.14L828 245.84L832 244.55L836 243.29L840 242.04L844 240.82L848 239.61L852 238.42L856 237.26L860 236.11L864 234.99L868 233.88L872 232.80L876 231.74L880 230.70L884 229.68L888 228.69L892 227.71L896 226.76L900 225.83L904 224.92L908 224.04L912 223.18L916 222.34L920 221.52L924 220.73L928 219.96L932 219.22L936 218.50L940 217.80L944 217.13L948 216.49L952 215.87L956 215.27L960 214.70L964 214.15L968 213.63L972 213.14L976 212.67L980 212.23L984 211.81L988 211.42L992 211.06L996 210.72L1000 210.41L1004 210.13L1008 209.88L1012 209.65L1016 209.45L1020 209.28L1024 209.14L1028 209.02L1032 208.94L1036 208.88L1040 208.85L1044 208.86L1048 208.89L1052 208.95L1056 209.04L1060 209.16L1064 209.31L1068 209.49L1072 209.70L1076 209.94L1080 210.21L1084 210.52L1088 210.85L1092 211.22L1096 211.61L1100 212.04L1104 212.51L1108 213.00L1112 213.53L1116 214.09L1120 214.68L1124 215.30L1128 215.96L1132 216.65L1136 217.37L1140 218.13L1144 218.92L1148 219.75L1152 220.61L1156 221.50L1160 222.43L1164 223.40L1168 224.40L1172 225.43L1176 226.50L1180 227.61L1184 228.75L1188 229.92L1192 231.14L1196 232.39L1200 233.67L1204 235.00L1208 236.36L1212 237.75L1216 239.19L1220 240.66L1224 242.17L1228 243.71L1232 245.30L1236 246.92L1240 248.58L1244 250.28L1248 252.02L1252 253.80L1256 255.62L1260 257.47L1264 259.37L1268 261.31L1272 263.28L1276 265.30L1280 267.35L1284 269.45L1288 271.59L1292 273.76L1296 275.98L1300 278.24L1304 280.54L1308 282.89L1312 285.27L1316 287.70L1320 290.17L1324 292.68L1328 295.23L1332 297.83L1336 300.47L1340 303.15L1344 305.88L1348 308.65L1352 311.46L1356 314.32L1360 317.22" stroke="#ff00ff" stroke-width="3" fill="none" shape-rendering="crispEdges"/>
<g shape-rendering="crispEdges"><path d="M0.5 703V721M8.5 689V713M16.5 693V730M24.5 659V706M32.5 657V735M40.5 684V738M48.5 688V705M56.5 680V701M54 694.5H59M64.5 690V773M72.5 725V779M80.5 709V775M88.5 747V771M96.5 752V772M94 756.5H99M104.5 739V767M112.5 714V765M120.5 578V719M128.5 527V601M136.5 544V562M144.5 532V569M152.5 505V567M160.5 447V585M168.5 390V517M176.5 399V493M184.5 464V495M192.5 464V498M200.5 466V491M208.5 481V544M216.5 525V568M224.5 514V565M232.5 515V535M230 525.5H235M240.5 519V534M248.5 520V555M256.5 525V566M264.5 527V559M272.5 511V553M270 536.5H275M280.5 526V545M278 536.5H283M288.5 515V543M296.5 509V535M304.5 496V524M312.5 506V588M320.5 547V605M328.5 540V560M336.5 540V554M344.5 531V553M352.5 523V551M360.5 528V557M368.5 519V556M376.5 533V549M384.5 540V557M392.5 533V552M390 541.5H395M400.5 524V547M408.5 522V544M406 539.5H411M416.5 509V562M424.5 514V538M432.5 511V525M430 522.5H435M440.5 506V525M448.5 503V540M456.5 495V551M464.5 448V510M472.5 405V456M480.5 407V439M478 418.5H483M488.5 410V425M496.5 369V429M504.5 346V399M512.5 326V387M520.5 358V387M528.5 379V391M536.5 382V401M544.5 378V398M552.5 380V487M560.5 423V491M568.5 438V456M576.5 443V460M584.5 432V450M592.5 421V439M590 435.5H595M600.5 413V441M608.5 397V435M616.5 355V402M624.5 344V369M632.5 334V359M640.5 320V347M648.5 330V354M656.5 281V354M664.5 259V287M672.5 258V272M680.5 258V281M688.5 256V286M696.5 237V281M704.5 204V253M712.5 185V224M720.5 182V197M718 190.5H723M728.5 188V211M736.5 188V221M734 206.5H739M744.5 186V222M752.5 156V242M760.5 112V162M768.5 140V163M776.5 154V171M784.5 128V193M782 165.5H787M792.5 159V197M800.5 167V242M808.5 214V241M806 219.5H811M816.5 199V225M824.5 187V208M832.5 183V219M840.5 192V220M848.5 76V220M856.5 68V116M864.5 66V93M872.5 68V101M880.5 87V111M888.5 98V140M896.5 99V156M904.5 110V140M912.5 125V138M910 135.5H915M920.5 118V138M928.5 112V136M936.5 105V155M944.5 116V151M952.5 85V131M960.5 94V115M968.5 102V141M976.5 136V179M984.5 161V230M992.5 172V224M1000.5 203V230M1008.5 182V208M1016.5 174V193M1024.5 170V285M1032.5 237V283M1030 263.5H1035M1040.5 254V313M1048.5 262V281M1056.5 266V283M1064.5 264V289M1072.5 245V283M1070 280.5H1075M1080.5 256V309M1088.5 268V332M1096.5 310V327M1094 322.5H1099M1104.5 311V332M1112.5 311V331M1120.5 274V330M1128.5 282V308M1126 291.5H1131M1136.5 282V305M1144.5 282V306M1152.5 290V306M1160.5 286V319M1168.5 292V327M1176.5 316V351M1174 324.5H1179M1184.5 288V346M1192.5 330V362M1200.5 318V342M1208.5 308V327M1216.5 299V328M1224.5 306V338M1222 317.5H1227M1232.5 245V322M1240.5 260V297M1248.5 260V279M1256.5 264V279M1264.5 234V278M1272.5 204V259M1280.5 204V263M1288.5 214V239M1296.5 210V225M1304.5 208V223M1312.5 202V219M1320.5 145V277M1328.5 177V297M1336.5 254V290M1344.5 251V271M1342 265.5H1347M1352.5 253V281M1360.5 277V288" stroke="#00ff00" stroke-width="1" fill="none"/><rect x="-1.5" y="706.5" width="4" height="10" fill="#000" stroke="#00ff00" stroke-width="1"/><rect x="6.5" y="698.5" width="4" height="8" fill="#000" stroke="#00ff00" stroke-width="1"/><rect x="22.5" y="671.5" width="4" height="31" fill="#000" stroke="#00ff00" stroke-width="1"/><rect x="38.5" y="696.5" width="4" height="28" fill="#000" stroke="#00ff00" stroke-width="1"/><rect x="46.5" y="694.5" width="4" height="4" fill="#000" stroke="#00ff00" stroke-width="1"/><rect x="70.5" y="746.5" width="4" height="20" fill="#000" stroke="#00ff00" stroke-width="1"/><rect x="86.5" y="757.5" width="4" height="6" fill="#000" stroke="#00ff00" stroke-width="1"/><rect x="102.5" y="743.5" width="4" height="12" fill="#000" stroke="#00ff00" stroke-width="1"/><rect x="110.5" y="715.5" width="4" height="29" fill="#000" stroke="#00ff00" stroke-width="1"/><rect x="118.5" y="586.5" width="4" height="130" fill="#000" stroke="#00ff00" stroke-width="1"/><rect x="126.5" y="552.5" width="4" height="36" fill="#000" stroke="#00ff00" stroke-width="1"/><rect x="134.5" y="552.5" width="4" height="2" fill="#000" stroke="#00ff00" stroke-width="1"/><rect x="150.5" y="517.5" width="4" height="28" fill="#000" stroke="#00ff00" stroke-width="1"/><rect x="158.5" y="486.5" width="4" height="31" fill="#000" stroke="#00ff00" stroke-width="1"/><rect x="166.5" y="419.5" width="4" height="68" fill="#000" stroke="#00ff00" stroke-width="1"/><rect x="190.5" y="467.5" width="4" height="22" fill="#000" stroke="#00ff00" stroke-width="1"/><rect x="222.5" y="525.5" width="4" height="39" fill="#000" stroke="#00ff00" stroke-width="1"/><rect x="238.5" y="522.5" width="4" height="4" fill="#000" stroke="#00ff00" stroke-width="1"/><rect x="254.5" y="540.5" width="4" height="12" fill="#000" stroke="#00ff00" stroke-width="1"/><rect x="262.5" y="535.5" width="4" height="6" fill="#000" stroke="#00ff00" stroke-width="1"/><rect x="286.5" y="524.5" width="4" height="14" fill="#000" stroke="#00ff00" stroke-width="1"/><rect x="294.5" y="519.5" width="4" height="6" fill="#000" stroke="#00ff00" stroke-width="1"/><rect x="302.5" y="510.5" width="4" height="9" fill="#000" stroke="#00ff00" stroke-width="1"/><rect x="318.5" y="557.5" width="4" height="19" fill="#000" stroke="#00ff00" stroke-width="1"/><rect x="326.5" y="541.5" width="4" height="16" fill="#000" stroke="#00ff00" stroke-width="1"/><rect x="342.5" y="539.5" width="4" height="11" fill="#000" stroke="#00ff00" stroke-width="1"/><rect x="366.5" y="542.5" width="4" height="10" fill="#000" stroke="#00ff00" stroke-width="1"/><rect x="382.5" y="542.5" width="4" height="6" fill="#000" stroke="#00ff00" stroke-width="1"/><rect x="398.5" y="538.5" width="4" height="3" fill="#000" stroke="#00ff00" stroke-width="1"/><rect x="414.5" y="535.5" width="4" height="4" fill="#000" stroke="#00ff00" stroke-width="1"/><rect x="422.5" y="522.5" width="4" height="13" fill="#000" stroke="#00ff00" stroke-width="1"/><rect x="438.5" y="506.5" width="4" height="18" fill="#000" stroke="#00ff00" stroke-width="1"/><rect x="454.5" y="503.5" width="4" height="30" fill="#000" stroke="#00ff00" stroke-width="1"/><rect x="462.5" y="451.5" width="4" height="52" fill="#000" stroke="#00ff00" stroke-width="1"/><rect x="470.5" y="415.5" width="4" height="36" fill="#000" stroke="#00ff00" stroke-width="1"/><rect x="486.5" y="416.5" width="4" height="2" fill="#000" stroke="#00ff00" stroke-width="1"/><rect x="494.5" y="372.5" width="4" height="44" fill="#000" stroke="#00ff00" stroke-width="1"/><rect x="510.5" y="373.5" width="4" height="3" fill="#000" stroke="#00ff00" stroke-width="1"/><rect x="534.5" y="385.5" width="4" height="4" fill="#000" stroke="#00ff00" stroke-width="1"/><rect x="558.5" y="441.5" width="4" height="37" fill="#000" stroke="#00ff00" stroke-width="1"/><rect x="574.5" y="446.5" width="4" height="8" fill="#000" stroke="#00ff00" stroke-width="1"/><rect x="582.5" y="434.5" width="4" height="12" fill="#000" stroke="#00ff00" stroke-width="1"/><rect x="598.5" y="416.5" width="4" height="20" fill="#000" stroke="#00ff00" stroke-width="1"/><rect x="606.5" y="400.5" width="4" height="15" fill="#000" stroke="#00ff00" stroke-width="1"/><rect x="614.5" y="360.5" width="4" height="39" fill="#000" stroke="#00ff00" stroke-width="1"/><rect x="622.5" y="354.5" width="4" height="6" fill="#000" stroke="#00ff00" stroke-width="1"/><rect x="630.5" y="339.5" width="4" height="14" fill="#000" stroke="#00ff00" stroke-width="1"/><rect x="646.5" y="340.5" width="4" height="2" fill="#000" stroke="#00ff00" stroke-width="1"/><rect x="654.5" y="282.5" width="4" height="58" fill="#000" stroke="#00ff00" stroke-width="1"/><rect x="662.5" y="262.5" width="4" height="20" fill="#000" stroke="#00ff00" stroke-width="1"/><rect x="686.5" y="271.5" width="4" height="4" fill="#000" stroke="#00ff00" stroke-width="1"/><rect x="694.5" y="240.5" width="4" height="31" fill="#000" stroke="#00ff00" stroke-width="1"/><rect x="702.5" y="212.5" width="4" height="28" fill="#000" stroke="#00ff00" stroke-width="1"/><rect x="710.5" y="188.5" width="4" height="24" fill="#000" stroke="#00ff00" stroke-width="1"/><rect x="742.5" y="195.5" width="4" height="12" fill="#000" stroke="#00ff00" stroke-width="1"/><rect x="750.5" y="159.5" width="4" height="37" fill="#000" stroke="#00ff00" stroke-width="1"/><rect x="758.5" y="151.5" width="4" height="9" fill="#000" stroke="#00ff00" stroke-width="1"/><rect x="814.5" y="204.5" width="4" height="15" fill="#000" stroke="#00ff00" stroke-width="1"/><rect x="822.5" y="190.5" width="4" height="14" fill="#000" stroke="#00ff00" stroke-width="1"/><rect x="846.5" y="113.5" width="4" height="101" fill="#000" stroke="#00ff00" stroke-width="1"/><rect x="854.5" y="80.5" width="4" height="34" fill="#000" stroke="#00ff00" stroke-width="1"/><rect x="862.5" y="79.5" width="4" height="11" fill="#000" stroke="#00ff00" stroke-width="1"/><rect x="894.5" y="117.5" width="4" height="18" fill="#000" stroke="#00ff00" stroke-width="1"/><rect x="918.5" y="122.5" width="4" height="13" fill="#000" stroke="#00ff00" stroke-width="1"/><rect x="942.5" y="126.5" width="4" height="14" fill="#000" stroke="#00ff00" stroke-width="1"/><rect x="950.5" y="96.5" width="4" height="30" fill="#000" stroke="#00ff00" stroke-width="1"/><rect x="990.5" y="213.5" width="4" height="4" fill="#000" stroke="#00ff00" stroke-width="1"/><rect x="998.5" y="204.5" width="4" height="9" fill="#000" stroke="#00ff00" stroke-width="1"/><rect x="1006.5" y="184.5" width="4" height="20" fill="#000" stroke="#00ff00" stroke-width="1"/><rect x="1014.5" y="178.5" width="4" height="6" fill="#000" stroke="#00ff00" stroke-width="1"/><rect x="1054.5" y="270.5" width="4" height="5" fill="#000" stroke="#00ff00" stroke-width="1"/><rect x="1102.5" y="316.5" width="4" height="10" fill="#000" stroke="#00ff00" stroke-width="1"/><rect x="1118.5" y="291.5" width="4" height="32" fill="#000" stroke="#00ff00" stroke-width="1"/><rect x="1142.5" y="285.5" width="4" height="9" fill="#000" stroke="#00ff00" stroke-width="1"/><rect x="1190.5" y="331.5" width="4" height="8" fill="#000" stroke="#00ff00" stroke-width="1"/><rect x="1198.5" y="324.5" width="4" height="9" fill="#000" stroke="#00ff00" stroke-width="1"/><rect x="1206.5" y="310.5" width="4" height="14" fill="#000" stroke="#00ff00" stroke-width="1"/><rect x="1230.5" y="262.5" width="4" height="54" fill="#000" stroke="#00ff00" stroke-width="1"/><rect x="1262.5" y="238.5" width="4" height="37" fill="#000" stroke="#00ff00" stroke-width="1"/><rect x="1278.5" y="235.5" width="4" height="14" fill="#000" stroke="#00ff00" stroke-width="1"/><rect x="1286.5" y="218.5" width="4" height="18" fill="#000" stroke="#00ff00" stroke-width="1"/><rect x="1294.5" y="214.5" width="4" height="6" fill="#000" stroke="#00ff00" stroke-width="1"/><rect x="1302.5" y="210.5" width="4" height="4" fill="#000" stroke="#00ff00" stroke-width="1"/><rect x="1310.5" y="207.5" width="4" height="4" fill="#000" stroke="#00ff00" stroke-width="1"/><rect x="1318.5" y="201.5" width="4" height="7" fill="#000" stroke="#00ff00" stroke-width="1"/><rect x="1334.5" y="260.5" width="4" height="16" fill="#000" stroke="#00ff00" stroke-width="1"/><rect x="14.5" y="698.5" width="4" height="4" fill="#fff" stroke="#00ff00" stroke-width="1"/><rect x="30.5" y="671.5" width="4" height="53" fill="#fff" stroke="#00ff00" stroke-width="1"/><rect x="62.5" y="695.5" width="4" height="71" fill="#fff" stroke="#00ff00" stroke-width="1"/><rect x="78.5" y="747.5" width="4" height="15" fill="#fff" stroke="#00ff00" stroke-width="1"/><rect x="142.5" y="539.5" width="4" height="6" fill="#fff" stroke="#00ff00" stroke-width="1"/><rect x="174.5" y="419.5" width="4" height="53" fill="#fff" stroke="#00ff00" stroke-width="1"/><rect x="182.5" y="471.5" width="4" height="17" fill="#fff" stroke="#00ff00" stroke-width="1"/><rect x="198.5" y="467.5" width="4" height="18" fill="#fff" stroke="#00ff00" stroke-width="1"/><rect x="206.5" y="485.5" width="4" height="40" fill="#fff" stroke="#00ff00" stroke-width="1"/><rect x="214.5" y="525.5" width="4" height="38" fill="#fff" stroke="#00ff00" stroke-width="1"/><rect x="246.5" y="522.5" width="4" height="30" fill="#fff" stroke="#00ff00" stroke-width="1"/><rect x="310.5" y="510.5" width="4" height="66" fill="#fff" stroke="#00ff00" stroke-width="1"/><rect x="334.5" y="544.5" width="4" height="6" fill="#fff" stroke="#00ff00" stroke-width="1"/><rect x="350.5" y="539.5" width="4" height="3" fill="#fff" stroke="#00ff00" stroke-width="1"/><rect x="358.5" y="543.5" width="4" height="9" fill="#fff" stroke="#00ff00" stroke-width="1"/><rect x="374.5" y="541.5" width="4" height="5" fill="#fff" stroke="#00ff00" stroke-width="1"/><rect x="446.5" y="506.5" width="4" height="27" fill="#fff" stroke="#00ff00" stroke-width="1"/><rect x="502.5" y="372.5" width="4" height="4" fill="#fff" stroke="#00ff00" stroke-width="1"/><rect x="518.5" y="373.5" width="4" height="11" fill="#fff" stroke="#00ff00" stroke-width="1"/><rect x="526.5" y="384.5" width="4" height="4" fill="#fff" stroke="#00ff00" stroke-width="1"/><rect x="542.5" y="385.5" width="4" height="10" fill="#fff" stroke="#00ff00" stroke-width="1"/><rect x="550.5" y="395.5" width="4" height="83" fill="#fff" stroke="#00ff00" stroke-width="1"/><rect x="566.5" y="441.5" width="4" height="12" fill="#fff" stroke="#00ff00" stroke-width="1"/><rect x="638.5" y="339.5" width="4" height="3" fill="#fff" stroke="#00ff00" stroke-width="1"/><rect x="670.5" y="265.5" width="4" height="2" fill="#fff" stroke="#00ff00" stroke-width="1"/><rect x="678.5" y="267.5" width="4" height="8" fill="#fff" stroke="#00ff00" stroke-width="1"/><rect x="726.5" y="191.5" width="4" height="13" fill="#fff" stroke="#00ff00" stroke-width="1"/><rect x="766.5" y="153.5" width="4" height="4" fill="#fff" stroke="#00ff00" stroke-width="1"/><rect x="774.5" y="157.5" width="4" height="7" fill="#fff" stroke="#00ff00" stroke-width="1"/><rect x="790.5" y="166.5" width="4" height="3" fill="#fff" stroke="#00ff00" stroke-width="1"/><rect x="798.5" y="169.5" width="4" height="51" fill="#fff" stroke="#00ff00" stroke-width="1"/><rect x="830.5" y="192.5" width="4" height="7" fill="#fff" stroke="#00ff00" stroke-width="1"/><rect x="838.5" y="199.5" width="4" height="15" fill="#fff" stroke="#00ff00" stroke-width="1"/><rect x="870.5" y="79.5" width="4" height="19" fill="#fff" stroke="#00ff00" stroke-width="1"/><rect x="878.5" y="98.5" width="4" height="4" fill="#fff" stroke="#00ff00" stroke-width="1"/><rect x="886.5" y="102.5" width="4" height="33" fill="#fff" stroke="#00ff00" stroke-width="1"/><rect x="902.5" y="117.5" width="4" height="18" fill="#fff" stroke="#00ff00" stroke-width="1"/><rect x="926.5" y="122.5" width="4" height="4" fill="#fff" stroke="#00ff00" stroke-width="1"/><rect x="934.5" y="126.5" width="4" height="12" fill="#fff" stroke="#00ff00" stroke-width="1"/><rect x="958.5" y="98.5" width="4" height="5" fill="#fff" stroke="#00ff00" stroke-width="1"/><rect x="966.5" y="104.5" width="4" height="33" fill="#fff" stroke="#00ff00" stroke-width="1"/><rect x="974.5" y="137.5" width="4" height="31" fill="#fff" stroke="#00ff00" stroke-width="1"/><rect x="982.5" y="169.5" width="4" height="48" fill="#fff" stroke="#00ff00" stroke-width="1"/><rect x="1022.5" y="177.5" width="4" height="86" fill="#fff" stroke="#00ff00" stroke-width="1"/><rect x="1038.5" y="264.5" width="4" height="4" fill="#fff" stroke="#00ff00" stroke-width="1"/><rect x="1046.5" y="267.5" width="4" height="6" fill="#fff" stroke="#00ff00" stroke-width="1"/><rect x="1062.5" y="270.5" width="4" height="10" fill="#fff" stroke="#00ff00" stroke-width="1"/><rect x="1078.5" y="280.5" width="4" height="10" fill="#fff" stroke="#00ff00" stroke-width="1"/><rect x="1086.5" y="290.5" width="4" height="31" fill="#fff" stroke="#00ff00" stroke-width="1"/><rect x="1110.5" y="316.5" width="4" height="7" fill="#fff" stroke="#00ff00" stroke-width="1"/><rect x="1134.5" y="290.5" width="4" height="4" fill="#fff" stroke="#00ff00" stroke-width="1"/><rect x="1150.5" y="293.5" width="4" height="11" fill="#fff" stroke="#00ff00" stroke-width="1"/><rect x="1158.5" y="304.5" width="4" height="10" fill="#fff" stroke="#00ff00" stroke-width="1"/><rect x="1166.5" y="314.5" width="4" height="10" fill="#fff" stroke="#00ff00" stroke-width="1"/><rect x="1182.5" y="325.5" width="4" height="13" fill="#fff" stroke="#00ff00" stroke-width="1"/><rect x="1214.5" y="311.5" width="4" height="7" fill="#fff" stroke="#00ff00" stroke-width="1"/><rect x="1238.5" y="264.5" width="4" height="3" fill="#fff" stroke="#00ff00" stroke-width="1"/><rect x="1246.5" y="267.5" width="4" height="6" fill="#fff" stroke="#00ff00" stroke-width="1"/><rect x="1254.5" y="273.5" width="4" height="2" fill="#fff" stroke="#00ff00" stroke-width="1"/><rect x="1270.5" y="238.5" width="4" height="13" fill="#fff" stroke="#00ff00" stroke-width="1"/><rect x="1326.5" y="201.5" width="4" height="74" fill="#fff" stroke="#00ff00" stroke-width="1"/><rect x="1350.5" y="266.5" width="4" height="12" fill="#fff" stroke="#00ff00" stroke-width="1"/><rect x="1358.5" y="278.5" width="4" height="7" fill="#fff" stroke="#00ff00" stroke-width="1"/></g>
<svg x="0" y="29" width="1675" height="767" viewBox="0 29 1675 767" overflow="hidden">
<path d="M172.10000000000002 341.52A13.2 13.2 0 1 1 163.5 341.52L163.5 357.2L159.3 357.2L167.8 365.5L176.3 357.2L172.10000000000002 357.2Z" fill="#ff0000"/>
<path d="M868.3 25.52A13.2 13.2 0 1 1 859.7 25.52L859.7 41.2L855.5 41.2L864 49.5L872.5 41.2L868.3 41.2Z" fill="#ff0000"/>
<path d="M1187.4 389.48A13.2 13.2 0 1 1 1196.0 389.48L1196.0 373.6L1200.7 373.6L1191.7 365.5L1182.7 373.6L1187.4 373.6Z" fill="#ffff00"/>
<path d="M67.7 809.48A13.2 13.2 0 1 1 76.3 809.48L76.3 793.6L81 793.6L72 785.5L63 793.6L67.7 793.6Z" fill="#ffff00"/>
</svg>
<path d="M1371.4 172.5L1384 179.3M1408.7 185L1419.6 197M1431 203L1444 210.5M1464.7 215.3L1476.6 225M1489.3 228.7L1499.5 237.6M1509 241.4L1515 246L1519.7 254.6M1536 266L1545 271L1557.8 281.5M1575 293.4L1591.5 309M1605 315L1621.7 336.5M1639 354L1652 369L1661 379M1440.4 470.4L1440.4 520.4L1438.1 532.1L1435.8 543L1434.2 556.3L1434.2 579M1438.9 533.4L1463 532.4M1488.5 472.5L1487.8 490.7L1486.5 511L1485 529L1483.4 532L1483.4 573.5M1553.3 461L1553.3 478.3L1547.4 497L1542.7 507.1L1535 529L1532.6 535.2L1532.6 540L1560.7 540L1564.6 541.5L1582.5 541.5M1591.4 492.8L1591.4 524.3L1589.5 527.4L1589.5 535.2L1587.2 543L1581.7 572L1581.4 588.3M1367.9 891.3L1376 904.2M1377.4 906.3L1387 908.3M1400 912.4L1410.2 916.5M1417.7 916.3L1432 915.4M1439.6 911L1449.1 906.3M1453.9 901.5L1463.5 892M1481.2 866L1485 858.5M1490.2 851.7L1505.4 837.3L1531 830M1550.7 830L1559 831.6M1565.9 835.8L1570.4 846.4L1578.7 857M1584 865.3L1591.6 877.4M1606.7 902.4L1612.7 908.4M1618 916L1624.8 923.5L1631.6 923.5M1637 923.5L1644.5 922.8M1654.3 917.5L1661.9 912.2M1664.9 895.6L1670.2 885.7M1674 876.7L1677.7 874.4" stroke="#ff0000" stroke-width="2.8" stroke-linecap="round" stroke-linejoin="round" fill="none"/>
<g font-family="Liberation Sans, sans-serif">
<text x="1574.5" y="56" font-size="12.5" fill="#00ffff" text-anchor="end" >1.10905</text>
<text x="1618.5" y="56" font-size="12.5" fill="#00ffff" text-anchor="end" >-200</text>
<text x="1664.5" y="56" font-size="12.5" fill="#00ffff" text-anchor="end" >207</text>
<text x="1664.5" y="91" font-size="43.5" fill="#00ffff" text-anchor="end" >1.10705</text>
<text x="1574.5" y="104" font-size="12.5" fill="#00b8ff" text-anchor="end" >1.10698</text>
<text x="1618.5" y="104" font-size="12.5" fill="#00b8ff" text-anchor="end" >7</text>
<text x="1664.5" y="104" font-size="12.5" fill="#00b8ff" text-anchor="end" >661.0</text>
<text x="1574.5" y="115.5" font-size="12.5" fill="#00b8ff" text-anchor="end" >197:16</text>
<text x="1618.5" y="115.5" font-size="12.5" fill="#00b8ff" text-anchor="end" >13.0</text>
<text x="1665" y="129" font-size="9.5" fill="#8b6a45" text-anchor="end" >Created by ServerUang</text>
<text transform="translate(1659.5 149) scale(0.93 1)" font-size="28.5" fill="#00ffff" text-anchor="end">EURUSD</text>
</g>
<path d="M0 827.5H1675M0 900.5H1675" stroke="#ffff00" stroke-width="1" shape-rendering="crispEdges"/>
<path d="M0 874.2L8 870.8L16 870.8L24 861.6L32 875.6L40 866.7L48 866.7L56 865.7L64 881.7L72 876.9L80 878.7L88 877.6L96 877.3L104 873.5L112 864.0L120 842.1L128 838.4L136 838.4L144 838.0L152 834.6L160 831.6L168 826.1L176 838.7L184 842.1L192 840.7L200 844.8L208 853.0L216 859.9L224 854.0L232 854.0L240 854.0L248 859.9L256 858.0L264 857.0L272 856.7L280 856.5L288 854.8L296 853.0L304 853.0L312 868.0L320 864.0L328 860.8L336 862.6L344 861.2L352 861.2L360 862.6L368 860.8L376 861.9L384 861.6L392 860.5L400 859.9L408 859.9L416 858.5L424 854.4L432 853.7L440 849.6L448 861.2L456 851.0L464 840.7L472 834.6L480 834.6L488 834.6L496 829.8L504 829.8L512 829.8L520 835.3L528 837.3L536 837.3L544 840.0L552 868.0L560 859.9L568 862.0L576 862.0L584 858.0L592 857.8L600 853.0L608 849.6L616 842.1L624 841.4L632 838.7L640 839.0L648 839.0L656 830.2L664 828.5L672 829.8L680 833.9L688 833.9L696 829.8L704 825.7L712 823.7L720 824.4L728 830.5L736 830.8L744 829.8L752 825.0L760 824.8L768 826.7L776 830.8L784 831.6L792 833.2L800 854.0L808 854.0L816 849.6L824 847.6L832 849.6L840 855.0L848 836.0L856 832.1L864 831.9L872 838.4L880 839.4L888 849.6L896 847.6L904 851.7L912 851.7L920 849.6L928 849.6L936 854.8L944 853.0L952 846.2L960 847.6L968 857.8L976 867.4L984 876.7L992 876.7L1000 873.5L1008 868.0L1016 866.7L1024 882.7L1032 882.7L1040 883.0L1048 884.0L1056 884.0L1064 884.4L1072 884.9L1080 887.9L1088 891.7L1096 891.7L1104 889.5L1112 889.5L1120 877.0L1128 877.6L1136 877.6L1144 874.5L1152 879.7L1160 882.4L1168 883.8L1176 883.8L1184 888.5L1192 883.5L1200 880.3L1208 874.6L1216 875.8L1224 875.8L1232 855.8L1240 856.5L1248 858.0L1256 859.9L1264 849.6L1272 853.0L1280 849.6L1288 845.5L1296 844.2L1304 843.5L1312 842.1L1320 842.1L1328 869.4L1336 864.6L1344 866.0L1352 870.8L1360 872.2" stroke="#ffff00" stroke-width="2" fill="none" stroke-linejoin="round" shape-rendering="crispEdges"/>
<path d="M0 911L17 894L27.3 874L39.6 846.9L47.8 840L54.6 847.6L68.3 864.6L84.7 887.9L95.6 897.7L104.5 896.7L118.8 875.6L136.6 845.5L150.2 828.5L163.9 818.2L177.5 815.2L191.2 816.2L200.7 818.9L210 827L219.6 835.3L229.1 852.4L237.3 868.7L247.6 896L257.8 907L271.5 911.8L278.3 913L337 913L352 908.3L364.3 900L376.6 887.9L387.5 871.5L397 853.7L406.6 827.8L417.6 816.8L429.6 814.8L521 814.8L536 819.6L547 828.5L555.2 837.3L564.8 856.5L575.7 883.8L583.9 895.4L592 903.6L601.6 903.6L608.4 897.4L616.6 885L624.8 867.4L633 846.9L640 834.6L647.8 826.4L657.3 818.9L671 814.4L772 814.4L783 816.8L793.9 827L802 841.4L810.2 863.3L817 877L826.6 889.2L833.5 895.8L840.3 894.7L853.7 875.6L867.3 852.4L881 833.2L891.9 826.7L897.4 825.7L905.5 827L913.7 832.6L927.4 847.6L943.8 866L952 877L960.2 895.4L965.6 896.3L999.8 896.3L1017.5 902.9L1033.9 911L1044.8 913.5L1111.5 913.5L1129.2 907L1145.6 890.6L1167.4 869.4L1184.5 857.8L1193.4 855L1200.2 856.2L1209.8 864L1216.6 866.7L1223.4 866.7L1233 855L1246.6 839.4L1258.9 825L1268.2 819.6L1280.5 814.4L1307.8 814.4L1320 816.8L1331 826.4L1337.8 833.9L1344.7 845.5L1351.5 864.6L1361 884.4" stroke="#ff00ff" stroke-width="2.5" fill="none" stroke-linejoin="round" shape-rendering="crispEdges"/>
<g shape-rendering="crispEdges" stroke="#fff" stroke-width="1" fill="none">
<path d="M0 28.5H1675.5V796.5H0"/>
<path d="M0 798.5H1675.5V928.5H0"/>
</g>
<path d="M1676 34.5H1678M1676 67.5H1678M1676 100.5H1678M1676 133.5H1678M1676 166.5H1678M1676 199.5H1678M1676 232.5H1678M1676 265.5H1678M1676 298.5H1678M1676 331.5H1678M1676 364.5H1678M1676 397.5H1678M1676 430.5H1678M1676 463.5H1678M1676 496.5H1678M1676 529.5H1678M1676 562.5H1678M1676 595.5H1678M1676 628.5H1678M1676 661.5H1678M1676 694.5H1678M1676 727.5H1678M1676 760.5H1678M1676 793.5H1678M1676 863.5H1678" stroke="#fff" stroke-width="1" shape-rendering="crispEdges"/>
<path d="M0.5 929V931M64.5 929V931M128.5 929V931M192.5 929V931M256.5 929V931M320.5 929V931M384.5 929V931M448.5 929V931M512.5 929V931M576.5 929V931M640.5 929V931M704.5 929V931M768.5 929V931M832.5 929V931M896.5 929V931M960.5 929V931M1024.5 929V931M1088.5 929V931M1152.5 929V931M1216.5 929V931M1280.5 929V931M1344.5 929V931" stroke="#fff" stroke-width="1" shape-rendering="crispEdges"/>
<g font-family="Liberation Sans, sans-serif" fill="#fff" font-size="9.3">
<text transform="translate(1681 38) scale(0.94 1)" font-size="9.9" stroke="#fff" stroke-width="0.25">1.12205</text>
<text transform="translate(1681 71) scale(0.94 1)" font-size="9.9" stroke="#fff" stroke-width="0.25">1.12005</text>
<text transform="translate(1681 104) scale(0.94 1)" font-size="9.9" stroke="#fff" stroke-width="0.25">1.11810</text>
<text transform="translate(1681 137) scale(0.94 1)" font-size="9.9" stroke="#fff" stroke-width="0.25">1.11610</text>
<text transform="translate(1681 170) scale(0.94 1)" font-size="9.9" stroke="#fff" stroke-width="0.25">1.11415</text>
<text transform="translate(1681 203) scale(0.94 1)" font-size="9.9" stroke="#fff" stroke-width="0.25">1.11220</text>
<text transform="translate(1681 236) scale(0.94 1)" font-size="9.9" stroke="#fff" stroke-width="0.25">1.11020</text>
<text transform="translate(1681 269) scale(0.94 1)" font-size="9.9" stroke="#fff" stroke-width="0.25">1.10825</text>
<text transform="translate(1681 302) scale(0.94 1)" font-size="9.9" stroke="#fff" stroke-width="0.25">1.10630</text>
<text transform="translate(1681 335) scale(0.94 1)" font-size="9.9" stroke="#fff" stroke-width="0.25">1.10430</text>
<text transform="translate(1681 368) scale(0.94 1)" font-size="9.9" stroke="#fff" stroke-width="0.25">1.10235</text>
<text transform="translate(1681 401) scale(0.94 1)" font-size="9.9" stroke="#fff" stroke-width="0.25">1.10035</text>
<text transform="translate(1681 434) scale(0.94 1)" font-size="9.9" stroke="#fff" stroke-width="0.25">1.09840</text>
<text transform="translate(1681 467) scale(0.94 1)" font-size="9.9" stroke="#fff" stroke-width="0.25">1.09640</text>
<text transform="translate(1681 500) scale(0.94 1)" font-size="9.9" stroke="#fff" stroke-width="0.25">1.09445</text>
<text transform="translate(1681 533) scale(0.94 1)" font-size="9.9" stroke="#fff" stroke-width="0.25">1.09250</text>
<text transform="translate(1681 566) scale(0.94 1)" font-size="9.9" stroke="#fff" stroke-width="0.25">1.09050</text>
<text transform="translate(1681 599) scale(0.94 1)" font-size="9.9" stroke="#fff" stroke-width="0.25">1.08855</text>
<text transform="translate(1681 632) scale(0.94 1)" font-size="9.9" stroke="#fff" stroke-width="0.25">1.08660</text>
<text transform="translate(1681 665) scale(0.94 1)" font-size="9.9" stroke="#fff" stroke-width="0.25">1.08460</text>
<text transform="translate(1681 698) scale(0.94 1)" font-size="9.9" stroke="#fff" stroke-width="0.25">1.08265</text>
<text transform="translate(1681 731) scale(0.94 1)" font-size="9.9" stroke="#fff" stroke-width="0.25">1.08070</text>
<text transform="translate(1681 764) scale(0.94 1)" font-size="9.9" stroke="#fff" stroke-width="0.25">1.07870</text>
<text transform="translate(1681 797) scale(0.94 1)" font-size="9.9" stroke="#fff" stroke-width="0.25">1.07675</text>
</g>
<rect x="1677" y="280" width="36" height="11" fill="#fff"/>
<text x="1681" y="289" font-family="Liberation Sans, sans-serif" font-size="9.3" fill="#000">1.10705</text>
<g font-family="Liberation Sans, sans-serif" font-size="9.35" fill="#fff">
<text x="1679" y="810">1.3</text>
<rect x="1677" y="822" width="20" height="11" fill="#ffff00"/><text x="1678" y="831" fill="#000">0.75</text>
<text x="1678" y="842">70</text>
<text x="1679" y="867">0.00</text>
<text x="1678" y="893">30</text>
<rect x="1677" y="895" width="23" height="11" fill="#ffff00"/><text x="1678" y="904" fill="#000">-0.75</text>
<text x="1678" y="925">-1.3</text>
</g>
<g font-family="Liberation Sans, sans-serif" font-size="9.35" fill="#fff">
<text transform="translate(-2 941) scale(0.945 1)" font-size="9.9" stroke="#fff" stroke-width="0.2">31 Jul 00:00</text>
<text transform="translate(64 941) scale(0.945 1)" font-size="9.9" stroke="#fff" stroke-width="0.2">1 Aug 08:00</text>
<text transform="translate(128 941) scale(0.945 1)" font-size="9.9" stroke="#fff" stroke-width="0.2">2 Aug 16:00</text>
<text transform="translate(192 941) scale(0.945 1)" font-size="9.9" stroke="#fff" stroke-width="0.2">6 Aug 00:00</text>
<text transform="translate(256 941) scale(0.945 1)" font-size="9.9" stroke="#fff" stroke-width="0.2">7 Aug 08:00</text>
<text transform="translate(320 941) scale(0.945 1)" font-size="9.9" stroke="#fff" stroke-width="0.2">8 Aug 16:00</text>
<text transform="translate(384 941) scale(0.945 1)" font-size="9.9" stroke="#fff" stroke-width="0.2">12 Aug 00:00</text>
<text transform="translate(448 941) scale(0.945 1)" font-size="9.9" stroke="#fff" stroke-width="0.2">13 Aug 08:00</text>
<text transform="translate(512 941) scale(0.945 1)" font-size="9.9" stroke="#fff" stroke-width="0.2">14 Aug 16:00</text>
<text transform="translate(576 941) scale(0.945 1)" font-size="9.9" stroke="#fff" stroke-width="0.2">16 Aug 00:00</text>
<text transform="translate(640 941) scale(0.945 1)" font-size="9.9" stroke="#fff" stroke-width="0.2">19 Aug 08:00</text>
<text transform="translate(704 941) scale(0.945 1)" font-size="9.9" stroke="#fff" stroke-width="0.2">20 Aug 16:00</text>
<text transform="translate(768 941) scale(0.945 1)" font-size="9.9" stroke="#fff" stroke-width="0.2">22 Aug 00:00</text>
<text transform="translate(832 941) scale(0.945 1)" font-size="9.9" stroke="#fff" stroke-width="0.2">23 Aug 08:00</text>
<text transform="translate(896 941) scale(0.945 1)" font-size="9.9" stroke="#fff" stroke-width="0.2">26 Aug 16:00</text>
<text transform="translate(960 941) scale(0.945 1)" font-size="9.9" stroke="#fff" stroke-width="0.2">28 Aug 00:00</text>
<text transform="translate(1024 941) scale(0.945 1)" font-size="9.9" stroke="#fff" stroke-width="0.2">29 Aug 08:00</text>
<text transform="translate(1088 941) scale(0.945 1)" font-size="9.9" stroke="#fff" stroke-width="0.2">30 Aug 16:00</text>
<text transform="translate(1152 941) scale(0.945 1)" font-size="9.9" stroke="#fff" stroke-width="0.2">3 Sep 00:00</text>
<text transform="translate(1216 941) scale(0.945 1)" font-size="9.9" stroke="#fff" stroke-width="0.2">4 Sep 08:00</text>
<text transform="translate(1280 941) scale(0.945 1)" font-size="9.9" stroke="#fff" stroke-width="0.2">5 Sep 16:00</text>
<text transform="translate(1344 941) scale(0.945 1)" font-size="9.9" stroke="#fff" stroke-width="0.2">9 Sep 00:00</text>
</g>
<!-- tab bar -->
<rect x="0" y="949" width="1713" height="2" fill="#ffffff"/>
<rect x="0" y="951" width="1713" height="1" fill="#3c3c3c"/>
<rect x="0" y="952" width="1713" height="19" fill="#f0f0f0"/>
<rect x="0" y="949" width="68" height="20" fill="#ffffff"/>
<rect x="0" y="969" width="69" height="1" fill="#000"/>
<rect x="68" y="951" width="1" height="19" fill="#000"/>
<rect x="69" y="970" width="1" height="1" fill="#a0a0a0"/>
<text x="-3" y="965" font-size="12" fill="#000" textLength="60" lengthAdjust="spacingAndGlyphs">EURUSD,H4</text>
<text x="80" y="965" font-size="12" fill="#707070" textLength="62" lengthAdjust="spacingAndGlyphs">GBPUSD,H4</text>
<rect x="153" y="954" width="1" height="14" fill="#555"/>
<path d="M1695 956L1690 960L1695 964Z" fill="#8c8c8c"/>
<path d="M1709 956L1714 960L1709 964Z" fill="#8c8c8c"/>
<!-- status bar -->
<rect x="0" y="971" width="1713" height="1" fill="#ffffff"/>
<rect x="0" y="972" width="1713" height="13" fill="#f0f0f0"/>
<g fill="#a0a0a0">
<rect x="1010" y="975" width="1" height="10"/><rect x="1126" y="975" width="1" height="10"/>
<rect x="1228" y="975" width="1" height="10"/><rect x="1299" y="975" width="1" height="10"/>
<rect x="1371" y="975" width="1" height="10"/><rect x="1438" y="975" width="1" height="10"/>
<rect x="1508" y="975" width="1" height="10"/><rect x="1574" y="975" width="1" height="10"/>
</g>
<text x="1016" y="988.5" font-size="12" fill="#000">Euro</text>
<g fill="#5a7a10"><rect x="1580" y="977" width="2" height="9"/><rect x="1584" y="977" width="2" height="9"/><rect x="1588" y="977" width="2" height="9"/><rect x="1592" y="977" width="2" height="9"/></g>
<g fill="#1a3a6a"><rect x="1596" y="979" width="2" height="7"/><rect x="1600" y="979" width="2" height="7"/></g>
<text x="1608" y="988.5" font-size="12" fill="#000">51/1 kb</text>
<!-- taskbar -->
<rect x="0" y="985" width="1713" height="1" fill="#ffffff"/>
<rect x="0" y="986" width="1713" height="1" fill="#16202a"/>
<rect x="0" y="987" width="1713" height="38" fill="#212d3a"/>
<rect x="4" y="994" width="24" height="24" rx="1.5" fill="#15528f"/><path d="M8 998H23.7V1007.7H14V1004H19.7V1001.7H12V1013.4H8Z M14 1010.5H21L22.7 1013.4H14Z" fill="#fff"/><circle cx="68" cy="1008" r="7" fill="#3a90d0"/><circle cx="61" cy="1009" r="6.5" fill="#d8c830"/><circle cx="65" cy="1001" r="5" fill="#40a040"/><circle cx="65" cy="1006" r="5" fill="#f0f0f0"/><text x="62" y="1010" font-size="10" font-weight="bold" fill="#e08020">5</text><rect x="102" y="994" width="24" height="24" rx="1.5" fill="#15528f"/><path d="M106 998H121.7V1007.7H112V1004H117.7V1001.7H110V1013.4H106Z M112 1010.5H119L120.7 1013.4H112Z" fill="#fff"/><circle cx="166" cy="1008" r="7" fill="#3a90d0"/><circle cx="159" cy="1009" r="6.5" fill="#d8c830"/><circle cx="163" cy="1001" r="5" fill="#40a040"/><circle cx="163" cy="1006" r="5" fill="#f0f0f0"/><text x="160" y="1010" font-size="10" font-weight="bold" fill="#e08020">5</text><circle cx="313" cy="1008" r="7" fill="#3a90d0"/><circle cx="306" cy="1009" r="6.5" fill="#d8c830"/><circle cx="310" cy="1001" r="5" fill="#40a040"/><circle cx="310" cy="1006" r="5" fill="#f0f0f0"/><text x="307" y="1010" font-size="10" font-weight="bold" fill="#e08020">5</text><rect x="347" y="994" width="24" height="24" rx="1.5" fill="#15528f"/><path d="M351 998H366.7V1007.7H357V1004H362.7V1001.7H355V1013.4H351Z M357 1010.5H364L365.7 1013.4H357Z" fill="#fff"/><rect x="396" y="994" width="24" height="24" rx="1.5" fill="#15528f"/><path d="M400 998H415.7V1007.7H406V1004H411.7V1001.7H404V1013.4H400Z M406 1010.5H413L414.7 1013.4H406Z" fill="#fff"/><rect x="445" y="994" width="24" height="24" rx="1.5" fill="#15528f"/><path d="M449 998H464.7V1007.7H455V1004H460.7V1001.7H453V1013.4H449Z M455 1010.5H462L463.7 1013.4H455Z" fill="#fff"/><rect x="592" y="994" width="24" height="24" rx="1.5" fill="#15528f"/><path d="M596 998H611.7V1007.7H602V1004H607.7V1001.7H600V1013.4H596Z M602 1010.5H609L610.7 1013.4H602Z" fill="#fff"/><circle cx="656" cy="1008" r="7" fill="#3a90d0"/><circle cx="649" cy="1009" r="6.5" fill="#d8c830"/><circle cx="653" cy="1001" r="5" fill="#40a040"/><circle cx="653" cy="1006" r="5" fill="#f0f0f0"/><text x="650" y="1010" font-size="10" font-weight="bold" fill="#e08020">5</text><circle cx="705" cy="1008" r="7" fill="#3a90d0"/><circle cx="698" cy="1009" r="6.5" fill="#d8c830"/><circle cx="702" cy="1001" r="5" fill="#40a040"/><circle cx="702" cy="1006" r="5" fill="#f0f0f0"/><text x="699" y="1010" font-size="10" font-weight="bold" fill="#e08020">5</text><circle cx="803" cy="1008" r="7" fill="#3a90d0"/><circle cx="796" cy="1009" r="6.5" fill="#d8c830"/><circle cx="800" cy="1001" r="5" fill="#40a040"/><circle cx="800" cy="1006" r="5" fill="#f0f0f0"/><text x="797" y="1010" font-size="10" font-weight="bold" fill="#e08020">5</text><rect x="837" y="994" width="24" height="24" rx="1.5" fill="#15528f"/><path d="M841 998H856.7V1007.7H847V1004H852.7V1001.7H845V1013.4H841Z M847 1010.5H854L855.7 1013.4H847Z" fill="#fff"/><rect x="984" y="994" width="24" height="24" rx="1.5" fill="#15528f"/><path d="M988 998H1003.7V1007.7H994V1004H999.7V1001.7H992V1013.4H988Z M994 1010.5H1001L1002.7 1013.4H994Z" fill="#fff"/><rect x="1278" y="994" width="24" height="24" rx="1.5" fill="#15528f"/><path d="M1282 998H1297.7V1007.7H1288V1004H1293.7V1001.7H1286V1013.4H1282Z M1288 1010.5H1295L1296.7 1013.4H1288Z" fill="#fff"/><path d="M201 997H209L211 999H223V1017H201Z" fill="#f0c030"/><rect x="201" y="1001" width="22" height="16" fill="#f8d458"/><path d="M207 1017V1010H217V1017H214V1013H210V1017Z" fill="#2a7ad8"/><ellipse cx="261" cy="1006" rx="11" ry="11.5" fill="#e01020"/><ellipse cx="261" cy="1006" rx="5" ry="8.5" fill="#212d3a"/><rect x="496" y="996" width="20" height="20" rx="3" fill="#f08040"/><rect x="501" y="996" width="10" height="20" fill="#f4f4ff"/><rect x="510" y="996" width="6" height="20" rx="2" fill="#7aa0f0"/><path d="M506 998V1012" stroke="#c02020" stroke-width="2"/><circle cx="506" cy="1013" r="2.5" fill="#d02020"/><circle cx="555" cy="1006" r="12" fill="#4a8ee0" stroke="#8ac0f8"/><text x="545" y="1011" font-size="13" fill="#fff">qb</text><path d="M741 1006L745 999L749 1003L753 997L757 1002L761 998L761 1006Z" fill="#e06a20"/><path d="M741 1004L745 1001L749 1004L753 1000L757 1003L761 1001" stroke="#40a040" stroke-width="1.5" fill="none"/><text x="739" y="1016" font-size="8" fill="#111">alpari</text><path d="M898 994C894 1002 891 1006 891 1011A7 7 0 0 0 905 1011C905 1006 902 1002 898 994Z" fill="#4a80c0"/><ellipse cx="898" cy="1012" rx="4" ry="3" fill="#a0c8f0"/><circle cx="947" cy="1006" r="11" fill="#1ea0f0"/><text x="942" y="1012" font-size="15" font-weight="bold" fill="#fff">S</text><circle cx="1045" cy="1006" r="7.5" fill="none" stroke="#fff" stroke-width="4" stroke-dasharray="3 2.9"/><circle cx="1045" cy="1006" r="5.5" fill="none" stroke="#fff" stroke-width="2.5"/><path d="M1085 1000L1097 995L1102 1006L1090 1011Z" fill="#fff" stroke="#c02020"/><circle cx="1096" cy="1002" r="2.5" fill="#e02020"/><text x="1084" y="1018" font-size="8" font-weight="bold" fill="#e04040">1000</text><rect x="1134" y="994" width="18" height="23" rx="1.5" fill="#4a5a6a" stroke="#6a7a8a"/><rect x="1136" y="996" width="14" height="4" fill="#5ac8f0"/><g fill="#8a9aaa"><rect x="1136" y="1002" width="4" height="3"/><rect x="1141" y="1002" width="4" height="3"/><rect x="1136" y="1007" width="4" height="3"/><rect x="1141" y="1007" width="4" height="3"/><rect x="1136" y="1012" width="4" height="3"/><rect x="1141" y="1012" width="4" height="3"/></g><rect x="1146" y="1007" width="4" height="8" fill="#2a6ad0"/><rect x="1180" y="994" width="24" height="24" fill="#d8d8d8"/><rect x="1184" y="1002" width="13" height="10" fill="#8a8a8a"/><path d="M1197 1004L1203 1001V1013L1197 1010Z" fill="#555"/><rect x="1229" y="994" width="24" height="23" rx="2" fill="#b8c0c8"/><rect x="1231" y="996" width="20" height="19" fill="#107080"/><rect x="1234" y="1000" width="14" height="10" fill="#f0f0f0"/><circle cx="1238" cy="1006" r="3" fill="#e04040"/><rect x="1327" y="994" width="24" height="24" rx="3" fill="#2a5ae0"/><rect x="1333" y="998" width="11" height="16" fill="#e8f0ff"/><rect x="1344" y="999" width="2" height="14" fill="#a0b8f0"/><path d="M1376 998L1400 1003L1384 1015Z" fill="#30b0e8"/><path d="M1376 998L1400 1003L1382 1006Z" fill="#70d8f8"/><rect x="0" y="1023" width="36" height="2" fill="#99ccee"/><rect x="241" y="1023" width="40" height="2" fill="#99ccee"/><path d="M1446 1009L1452 1003L1458 1009" stroke="#fff" stroke-width="1.6" fill="none"/><circle cx="1476" cy="1006" r="8" fill="#c8d820"/><path d="M1471 1006H1481M1476 1001V1011" stroke="#1a8a2a" stroke-width="3"/><rect x="1489" y="987" width="22" height="38" fill="#3b4753"/><path d="M1493 1013C1496 1006 1500 1001 1507 998C1505 1004 1500 1010 1493 1013Z" fill="#a070d8"/><rect x="1517.5" y="1000.5" width="14" height="9" fill="none" stroke="#fff"/><path d="M1521 1013H1528M1524.5 1010V1013" stroke="#fff"/><rect x="1516" y="999" width="3" height="3" fill="#fff"/><path d="M1541 1004H1544L1548 1000V1012L1544 1008H1541Z" fill="none" stroke="#fff"/><path d="M1550 1003Q1552 1006 1550 1009M1552.5 1001Q1556 1006 1552.5 1011" stroke="#fff" fill="none"/><text x="1567" y="1010.5" font-size="13" fill="#fff" textLength="22" lengthAdjust="spacingAndGlyphs">РУС</text><text x="1615.5" y="1000.5" font-size="12" fill="#fff" textLength="26" lengthAdjust="spacingAndGlyphs">10:42</text><text x="1601.5" y="1018.5" font-size="12" fill="#fff" textLength="54" lengthAdjust="spacingAndGlyphs">09.09.2024</text><path d="M1674.5 998.5H1689.5V1010.5H1684L1682 1013L1680 1010.5H1674.5Z" fill="none" stroke="#fff" stroke-width="1.2"/><rect x="1710" y="988" width="1" height="37" fill="#7a8590"/><path d="M1501 1007V1023L1505 1019L1508 1025L1511 1024L1508 1018H1513Z" fill="#fff" stroke="#000" stroke-width="1"/>
</svg>
</body></html>
